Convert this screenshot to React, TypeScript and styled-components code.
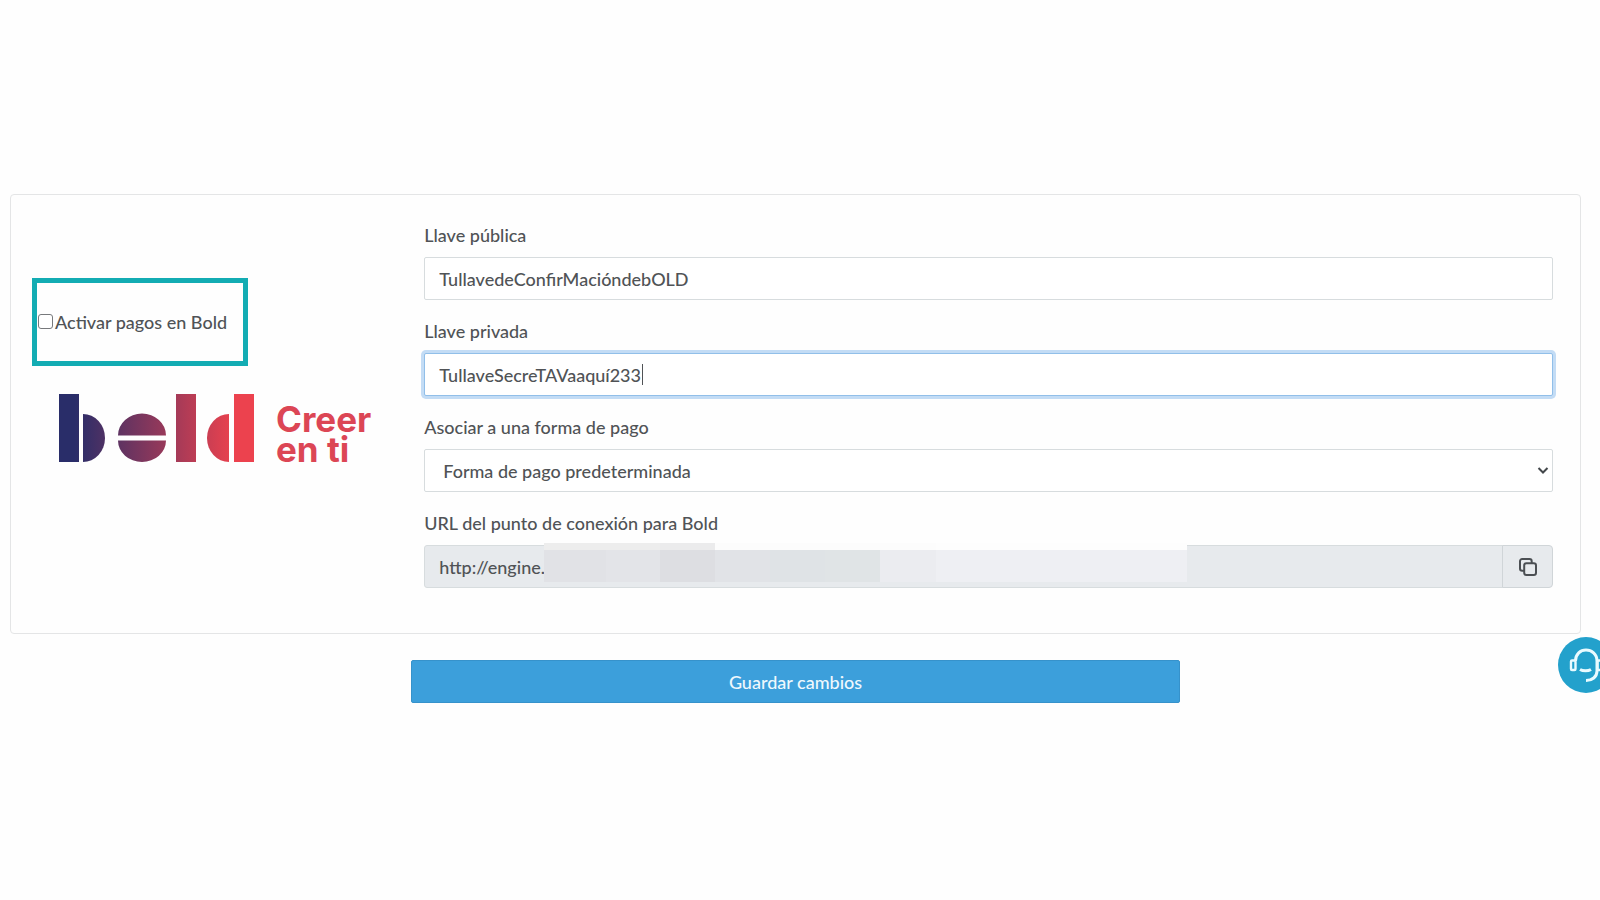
import React, { useState } from "react";
import styled, { createGlobalStyle } from "styled-components";

const GlobalStyle = createGlobalStyle`
  *, *::before, *::after { box-sizing: border-box; }
  body {
    margin: 0;
    background: #fefefe;
    color: #505356;
    font-family: Lato, "Liberation Sans", sans-serif;
    font-size: 18px;
    font-weight: 500;
    line-height: 24px;
  }
  button, input, select { font: inherit; color: inherit; }
`;

const Page = styled.main`
  padding: 194px 19px 40px 10px;
`;

const Card = styled.section`
  display: grid;
  grid-template-columns: 1fr 3fr;
  border: 1px solid #e4e5e6;
  border-radius: 4px;
  background: #fefefe;
`;

const Brand = styled.div`
  display: flex;
  flex-direction: column;
  align-items: flex-start;
  gap: 27px;
  padding: 83px 21px 0;
`;

const Highlight = styled.div`
  display: flex;
  align-items: center;
  width: 216px;
  height: 88px;
  border: 5px solid #13acb3;
`;

const CheckLabel = styled.label`
  display: flex;
  align-items: center;
  gap: 2px;
  white-space: nowrap;
`;

const Checkbox = styled.input`
  appearance: none;
  width: 15px;
  height: 15px;
  margin: 0 0 2px 1px;
  border: 1px solid #77797c;
  border-radius: 3px;
  background: #fff;
  &:checked { background: #3c9fdb; }
`;

const Logo = styled.svg`
  display: block;
  margin-left: 27px;
  font-family: Inter, "Open Sans", sans-serif;
  font-weight: 700;
`;

const Fields = styled.form`
  display: flex;
  flex-direction: column;
  gap: 19px;
  padding: 28px 27px 45px 21px;
`;

const Field = styled.div`
  display: flex;
  flex-direction: column;
  gap: 10px;
`;

const FieldLabel = styled.label`
  align-self: flex-start;
`;

const Control = styled.div`
  position: relative;
  display: flex;
  height: 43px;
`;

const TextInput = styled.input<{ $active?: boolean; $locked?: boolean }>`
  flex: 1;
  min-width: 0;
  padding: 0 14px;
  border: 1px solid ${(p) => (p.$active ? "#91bfe9" : "#d7dcde")};
  border-radius: ${(p) => (p.$locked ? "3px 0 0 3px" : "2px")};
  background: ${(p) => (p.$locked ? "#e7eaed" : "#fff")};
  box-shadow: ${(p) => (p.$active ? "0 0 0 3px #c3dcf5" : "none")};
  outline: none;
  caret-color: ${(p) => (p.$active ? "transparent" : "auto")};
`;

const Caret = styled.span`
  position: absolute;
  left: 218px;
  top: 11px;
  width: 1px;
  height: 21px;
  background: #505356;
`;

const Select = styled.select`
  flex: 1;
  min-width: 0;
  appearance: none;
  padding: 0 36px 0 18px;
  border: 1px solid #d7dcde;
  border-radius: 2px;
  background: #fff;
`;

const Chevron = styled.svg`
  position: absolute;
  right: 4px;
  top: 17px;
  pointer-events: none;
`;

const CopyButton = styled.button`
  display: flex;
  align-items: center;
  justify-content: center;
  width: 51px;
  margin-left: -1px;
  padding: 0;
  border: 1px solid #d0d5d8;
  border-radius: 0 4px 4px 0;
  background: #e7eaed;
`;

const Mask = styled.div`
  position: absolute;
  left: 120px;
  top: -2px;
  display: flex;
  height: 39px;
`;

const MaskTile = styled.span<{ $w: number; $top: string; $fill: string }>`
  width: ${(p) => p.$w}px;
  border-top: 7px solid ${(p) => p.$top};
  background: ${(p) => p.$fill};
`;

const SaveButton = styled.button`
  display: block;
  width: 49%;
  height: 43px;
  margin: 26px auto 0;
  padding: 0;
  border: 1px solid #3692cb;
  border-radius: 2px;
  background: #3c9fdb;
  color: #eef8fd;
`;

const HelpButton = styled.button`
  position: fixed;
  top: 637px;
  right: -14px;
  width: 56px;
  height: 56px;
  padding: 0;
  border: 0;
  border-radius: 50%;
  background: #23a1cc;
`;

const tiles = [
  { w: 62, top: "#ededed", fill: "#e1e2e6" },
  { w: 54, top: "#ededed", fill: "#e3e4e8" },
  { w: 55, top: "#ebebec", fill: "#dddee2" },
  { w: 55, top: "#fcfcfc", fill: "#e1e3e7" },
  { w: 55, top: "#fcfcfc", fill: "#dfe3e6" },
  { w: 55, top: "#fcfcfc", fill: "#e0e4e6" },
  { w: 56, top: "#fcfcfc", fill: "#ebecf0" },
  { w: 251, top: "#fdfdfd", fill: "#eeeff3" },
];

function BoldLogo() {
  return (
    <Logo width="320" height="80" viewBox="0 0 320 80" role="img" aria-label="Bold, Creer en ti">
      <defs>
        <linearGradient id="brand" gradientUnits="userSpaceOnUse" x1="0" y1="0" x2="195" y2="0">
          <stop offset="0.08" stopColor="#292d69" />
          <stop offset="0.9" stopColor="#ec424e" />
        </linearGradient>
      </defs>
      <g fill="url(#brand)">
        <rect x="0" y="1" width="20" height="68" />
        <path d="M24 21a22 24 0 0 1 0 48z" />
        <path d="M59 42.500a24 22 0 0 1 48 0zM59 47.500a24 21.500 0 0 0 48 0z" />
        <rect x="117" y="1" width="20" height="68" />
        <path d="M170 21a22 24 0 0 0 0 48z" />
        <rect x="175" y="1" width="20" height="68" />
      </g>
      <g fill="#dc4655" fontSize="35">
        <text x="217" y="39">Creer</text>
        <text x="217" y="69">en ti</text>
      </g>
    </Logo>
  );
}

export default function App() {
  const [publicKey, setPublicKey] = useState("TullavedeConfirMacióndebOLD");
  const [privateKey, setPrivateKey] = useState("TullaveSecreTAVaaquí233");

  return (
    <>
      <GlobalStyle />
      <Page>
        <Card>
          <Brand>
            <Highlight>
              <CheckLabel>
                <Checkbox type="checkbox" />
                Activar pagos en Bold
              </CheckLabel>
            </Highlight>
            <BoldLogo />
          </Brand>
          <Fields id="bold-form" onSubmit={(e) => e.preventDefault()}>
            <Field>
              <FieldLabel htmlFor="public-key">Llave pública</FieldLabel>
              <Control>
                <TextInput id="public-key" value={publicKey} onChange={(e) => setPublicKey(e.target.value)} />
              </Control>
            </Field>
            <Field>
              <FieldLabel htmlFor="private-key">Llave privada</FieldLabel>
              <Control>
                <TextInput id="private-key" $active value={privateKey} onChange={(e) => setPrivateKey(e.target.value)} />
                <Caret />
              </Control>
            </Field>
            <Field>
              <FieldLabel htmlFor="payment">Asociar a una forma de pago</FieldLabel>
              <Control>
                <Select id="payment">
                  <option>Forma de pago predeterminada</option>
                </Select>
                <Chevron width="12" height="9" viewBox="0 0 12 9" fill="none" stroke="#43474b" strokeWidth="2">
                  <path d="M1.500 2 6 6.500 10.500 2" />
                </Chevron>
              </Control>
            </Field>
            <Field>
              <FieldLabel htmlFor="endpoint">URL del punto de conexión para Bold</FieldLabel>
              <Control>
                <TextInput id="endpoint" $locked readOnly value="http://engine." />
                <Mask aria-hidden="true">
                  {tiles.map((t, i) => (
                    <MaskTile key={i} $w={t.w} $top={t.top} $fill={t.fill} />
                  ))}
                </Mask>
                <CopyButton type="button" aria-label="Copiar URL">
                  <svg width="18" height="18" viewBox="0 0 18 18" fill="none" stroke="#4b4f53" strokeWidth="2">
                    <rect x="5.200" y="5.200" width="11.800" height="11.800" rx="2.200" />
                    <path d="M5 12.700H3.200A2.200 2.200 0 0 1 1 10.500V3.200A2.200 2.200 0 0 1 3.200 1h7.300a2.200 2.200 0 0 1 2.200 2.200V5" />
                  </svg>
                </CopyButton>
              </Control>
            </Field>
          </Fields>
        </Card>
        <SaveButton type="submit" form="bold-form">Guardar cambios</SaveButton>
      </Page>
      <HelpButton type="button" aria-label="Ayuda">
        <svg width="56" height="56" viewBox="0 0 56 56" fill="none" stroke="#e9fbff" strokeWidth="3">
          <path d="M17.500 24c0-7 5-11 10.500-11S39 17 39 24v10c0 6-5 9.500-11 9.500" />
          <rect x="13" y="23.500" width="4.500" height="9.500" rx="1" strokeWidth="2.400" />
          <rect x="39.500" y="23.500" width="4.500" height="9.500" rx="1" strokeWidth="2.400" />
          <path d="M22 32.500c3 1.800 8 1.800 11 0" />
        </svg>
      </HelpButton>
    </>
  );
}
